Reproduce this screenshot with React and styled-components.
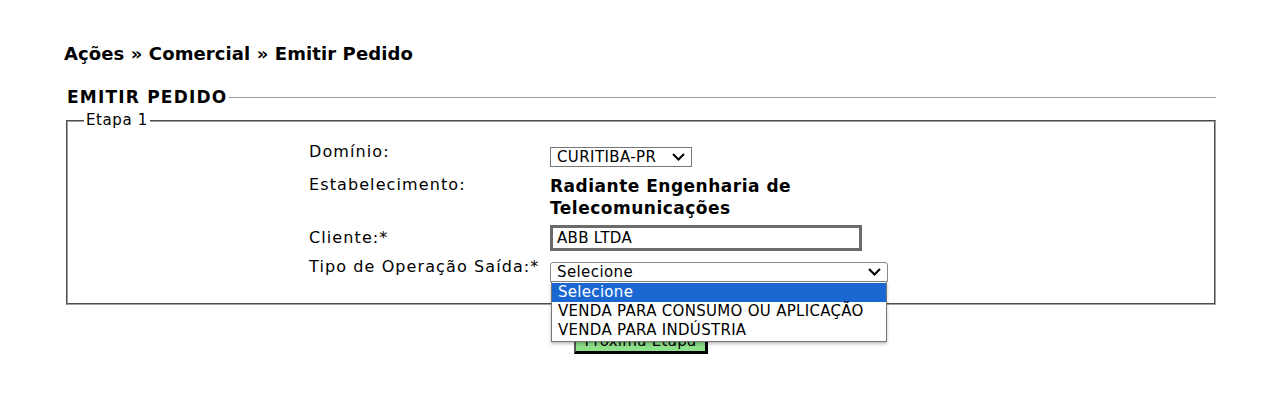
import React from 'react';
import styled, { createGlobalStyle } from 'styled-components';

const GlobalStyle = createGlobalStyle`
    body {
        margin: 0;
        background: #ffffff;
        font-family: "DejaVu Sans", Verdana, sans-serif;
        color: #000;
    }
`;

const Page = styled.div`
    padding: 43px 45px 0 64px;
`;

const Breadcrumb = styled.h1`
    margin: 0 0 22px 0;
    font-size: 18px;
    font-weight: bold;
    letter-spacing: 0.1px;
    line-height: 22px;
`;

const Section = styled.fieldset`
    margin: 0;
    padding: 0 0 0 2px;
    border: none;
    border-top: 1px solid #9a9a9a;
    min-width: 0;

    & > legend {
        margin-left: -2px;
        padding: 0 2px 0 3px;
        font-size: 17px;
        font-weight: bold;
        letter-spacing: 1.2px;
        line-height: 20px;
    }
`;

const Step = styled.fieldset`
    position: relative;
    margin: 5px 0 0 0;
    padding: 13px 0 21px 0;
    border: 2px groove #a0a0a0;
    min-width: 0;

    & > legend {
        margin-left: 16px;
        padding: 0 2px;
        font-size: 15px;
        letter-spacing: 0.6px;
        line-height: 17px;
    }
`;

const FormGrid = styled.div`
    display: grid;
    grid-template-columns: 241px auto;
    row-gap: 6px;
    margin-left: 241px;
    font-size: 16px;
    letter-spacing: 1.1px;
`;

const Label = styled.div`
    line-height: 19px;
    padding-top: ${p => p.$top || 0}px;
`;

const Value = styled.div`
    position: relative;
    display: flex;
    align-items: flex-start;
`;

const Strong = styled.div`
    font-weight: bold;
    font-size: 17px;
    letter-spacing: 0.5px;
    line-height: 22px;
    width: 300px;
    padding-top: 2px;
`;

const SelectBox = styled.div`
    box-sizing: border-box;
    display: flex;
    align-items: center;
    justify-content: space-between;
    width: ${p => p.$w}px;
    height: ${p => p.$h || 20}px;
    margin-top: ${p => p.$top || 0}px;
    padding: 0 5px 0 6px;
    border: 1px solid ${p => (p.$open ? '#888' : '#767676')};
    border-radius: ${p => (p.$open ? '3px 3px 0 0' : '0')};
    font-size: 15px;
    letter-spacing: 0.4px;
    background: #fff;
`;

const TextInput = styled.div`
    box-sizing: border-box;
    width: 312px;
    height: 26px;
    padding: 0 4px;
    border: 3px solid #6b6b6b;
    font-size: 15px;
    letter-spacing: 0.3px;
    line-height: 20px;
`;

const Dropdown = styled.ul`
    position: absolute;
    left: 1px;
    top: 20px;
    width: 336px;
    margin: 0;
    padding: 1px 0 1px 0;
    list-style: none;
    box-sizing: border-box;
    background: #fff;
    border: 1px solid #767676;
    border-top: none;
    box-shadow: 0 2px 3px rgba(0, 0, 0, 0.25);
    z-index: 5;
`;

const Option = styled.li`
    padding: 0 6px;
    font-size: 15px;
    letter-spacing: 0.3px;
    line-height: 19px;
    color: ${p => (p.$active ? '#fff' : '#000')};
    background: ${p => (p.$active ? '#1a67d2' : 'transparent')};
`;

const Actions = styled.div`
    display: flex;
    justify-content: center;
    padding: 23px 0 0 2px;
`;

const NextButton = styled.button`
    box-sizing: border-box;
    width: 134px;
    height: 26px;
    padding: 0;
    font-family: "DejaVu Sans", Verdana, sans-serif;
    font-size: 15px;
    letter-spacing: 0.3px;
    background: #8ee08a;
    border: 2px solid #000;
    border-top-color: #555;
    border-left-color: #555;
    border-bottom-width: 3px;
    border-right-width: 3px;
`;

const Chevron = () => (
    <svg width="15" height="10" viewBox="0 0 15 10">
        <polyline points="2,2 7.5,7.5 13,2" fill="none" stroke="#000" strokeWidth="2" />
    </svg>
);

function App() {
    return (
        <Page>
            <GlobalStyle />
            <Breadcrumb>Ações » Comercial » Emitir Pedido</Breadcrumb>
            <Section>
                <legend>EMITIR PEDIDO</legend>
                <Step>
                    <legend>Etapa 1</legend>
                    <FormGrid>
                        <Label>Domínio:</Label>
                        <Value>
                            <SelectBox $w={142} $top={5}>
                                <span>CURITIBA-PR</span>
                                <Chevron />
                            </SelectBox>
                        </Value>

                        <Label $top={2}>Estabelecimento:</Label>
                        <Value>
                            <Strong>Radiante Engenharia de Telecomunicações</Strong>
                        </Value>

                        <Label $top={3}>Cliente:*</Label>
                        <Value>
                            <TextInput>ABB LTDA</TextInput>
                        </Value>

                        <Label>Tipo de Operação Saída:*</Label>
                        <Value>
                            <SelectBox $w={338} $top={5} $open>
                                <span>Selecione</span>
                                <Chevron />
                            </SelectBox>
                            <Dropdown style={{ top: 25 }}>
                                <Option $active>Selecione</Option>
                                <Option>VENDA PARA CONSUMO OU APLICAÇÃO</Option>
                                <Option>VENDA PARA INDÚSTRIA</Option>
                            </Dropdown>
                        </Value>
                    </FormGrid>
                </Step>
            </Section>
            <Actions>
                <NextButton>Próxima Etapa</NextButton>
            </Actions>
        </Page>
    );
}

export default App;
